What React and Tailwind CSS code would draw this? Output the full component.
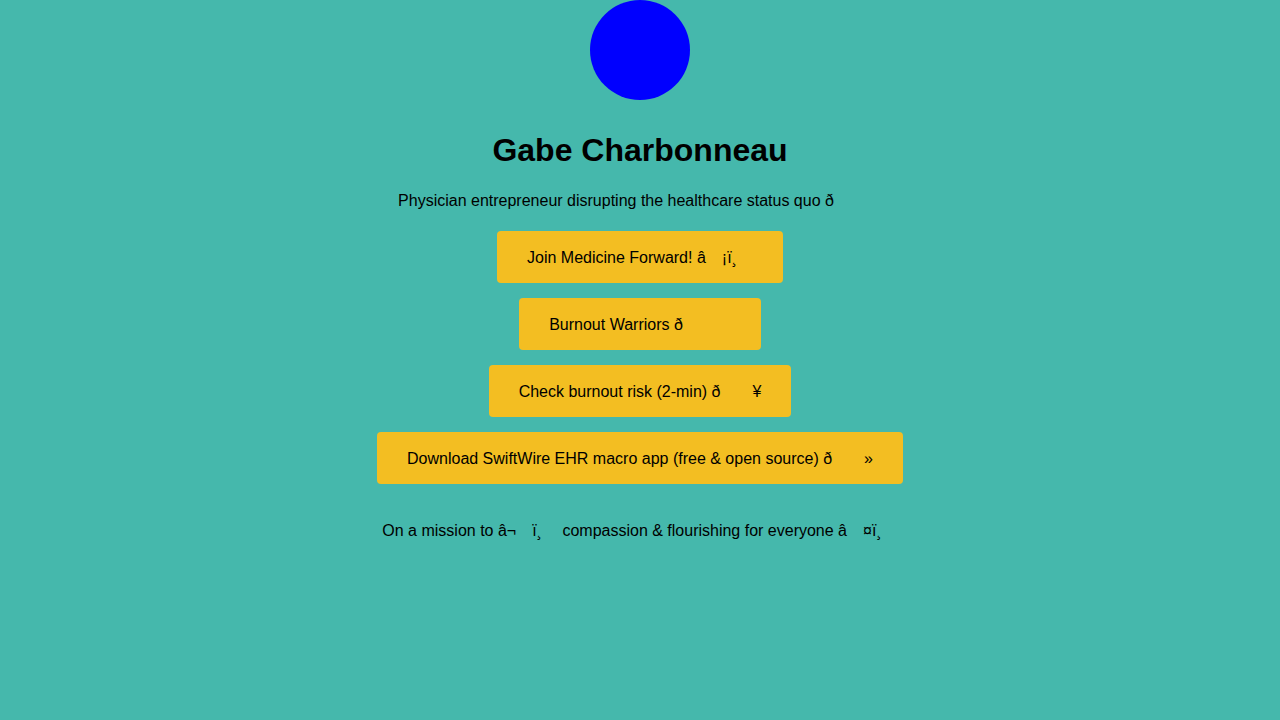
const Gap = ({ w = "w-[16px]" }) => <span className={`inline-block ${w}`} />;

const links = [
  {
    label: (
      <>
        Join Medicine Forward! â<Gap />¡ï¸<Gap />
      </>
    ),
  },
  {
    label: (
      <>
        Burnout Warriors ð<Gap />
        <Gap />
        <Gap />
      </>
    ),
  },
  {
    label: (
      <>
        Check burnout risk (2-min) ð<Gap />
        <Gap />¥
      </>
    ),
  },
  {
    label: (
      <>
        Download SwiftWire EHR macro app (free &amp; open source) ð<Gap />
        <Gap />»
      </>
    ),
  },
];

export default function App() {
  return (
    <div
      className="min-h-screen w-full bg-[#45b8ac] text-black flex flex-col items-center"
      style={{ fontFamily: '"Liberation Sans", Arial, sans-serif' }}
    >
      <div className="w-[100px] h-[100px] rounded-full bg-[#0000ff]" />

      <h1 className="mt-[32px] text-[32px] leading-[37px] font-bold">Gabe Charbonneau</h1>

      <p className="mt-[23px] text-[16px] leading-[18px]">
        Physician entrepreneur disrupting the healthcare status quo ð<Gap />
        <Gap />
        <Gap />
      </p>

      <div className="mt-[21px] flex flex-col items-center gap-[15px]">
        {links.map((l, i) => (
          <a
            key={i}
            href="#"
            className="h-[52px] px-[30px] pt-[1px] flex items-center rounded-[4px] bg-[#f3be22] text-[16px] whitespace-nowrap"
          >
            {l.label}
          </a>
        ))}
      </div>

      <p className="mt-[38px] text-[16px] leading-[18px]">
        On a mission to â¬<Gap />ï¸<Gap /> compassion &amp; flourishing for everyone â<Gap />¤ï¸<Gap />
      </p>
    </div>
  );
}
